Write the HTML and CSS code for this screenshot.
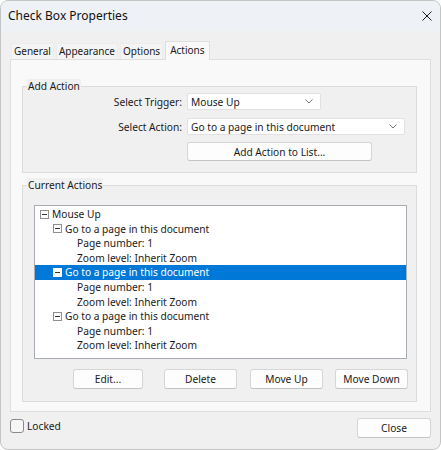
FILE: index.html
```html
<!DOCTYPE html>
<html lang="en">
<head>
    <meta charset="UTF-8">
    <title>Check Box Properties</title>
    <link rel="stylesheet" href="styles.css">
</head>
<body>
<div class="window">
    <div class="titlebar">
        <span class="title">Check Box Properties</span>
        <svg class="close-x" width="10" height="10" viewBox="0 0 10 10">
            <path d="M0.5 0.5 L9.5 9.5 M9.5 0.5 L0.5 9.5" stroke="#1b1b1b" stroke-width="1" fill="none"/>
        </svg>
    </div>
    <div class="content">
        <div class="tabs">
            <div class="tab">General</div>
            <div class="tab">Appearance</div>
            <div class="tab">Options</div>
            <div class="tab active">Actions</div>
        </div>
        <div class="panel">
            <div class="group addGroup">
                <div class="groupTitle">Add Action</div>
                <div class="formRow">
                    <span class="lbl">Select Trigger:</span>
                    <div class="select selTrigger">
                        <span>Mouse Up</span>
                        <svg width="8" height="5" viewBox="0 0 8 5"><path d="M0.5 0.5 L4 4 L7.5 0.5" stroke="#7a7a7a" fill="none"/></svg>
                    </div>
                </div>
                <div class="formRow">
                    <span class="lbl">Select Action:</span>
                    <div class="select selAction">
                        <span>Go to a page in this document</span>
                        <svg width="8" height="5" viewBox="0 0 8 5"><path d="M0.5 0.5 L4 4 L7.5 0.5" stroke="#7a7a7a" fill="none"/></svg>
                    </div>
                </div>
                <div class="formRow">
                    <span class="lbl"></span>
                    <button class="btn addBtn">Add Action to List...</button>
                </div>
            </div>

            <div class="group currentGroup">
                <div class="groupTitle">Current Actions</div>
                <div class="listbox">
                    <div class="node lv1"><span class="toggle"></span>Mouse Up</div>
                    <div class="node lv2"><span class="toggle"></span>Go to a page in this document</div>
                    <div class="node lv3">Page number: 1</div>
                    <div class="node lv3">Zoom level: Inherit Zoom</div>
                    <div class="node lv2 selected"><span class="toggle"></span>Go to a page in this document</div>
                    <div class="node lv3">Page number: 1</div>
                    <div class="node lv3">Zoom level: Inherit Zoom</div>
                    <div class="node lv2"><span class="toggle"></span>Go to a page in this document</div>
                    <div class="node lv3">Page number: 1</div>
                    <div class="node lv3">Zoom level: Inherit Zoom</div>
                </div>
                <div class="btnRow">
                    <button class="btn editBtn">Edit...</button>
                    <button class="btn deleteBtn">Delete</button>
                    <button class="btn">Move Up</button>
                    <button class="btn">Move Down</button>
                </div>
            </div>
        </div>
        <div class="footer">
            <label class="check"><span class="box"></span>Locked</label>
            <button class="btn closeBtn">Close</button>
        </div>
    </div>
</div>
</body>
</html>
```

FILE: styles.css
```css
* {
    box-sizing: border-box;
}

html, body {
    margin: 0;
    background: #ffffff;
}

body {
    font-family: "Noto Sans", "Open Sans", sans-serif;
    font-size: 10.2px;
    color: #1a1a1a;
}

.window {
    width: 441px;
    height: 450px;
    border: 1px solid #c4c4c4;
    border-radius: 8px;
    overflow: hidden;
    background: #f0f0f0;
    display: flex;
    flex-direction: column;
}

.titlebar {
    height: 30px;
    background: #eef2f7;
    display: flex;
    align-items: center;
    justify-content: space-between;
    padding: 0 8px 2px 7px;
}

.title {
    font-size: 12px;
    color: #111;
}

.close-x {
    display: block;
    margin-top: 2px;
}

.content {
    padding: 10px 9px 0 9px;
    flex: 1;
    display: flex;
    flex-direction: column;
}

.tabs {
    display: flex;
    align-items: flex-end;
    gap: 2px;
    padding-left: 1px;
    height: 18px;
    font-size: 10px;
}

.tab {
    height: 16px;
    line-height: 15px;
    padding: 0 2px;
    background: #f4f4f4;
    border: 1px solid #ececec;
    border-bottom: none;
}

.tab.active {
    height: 19px;
    line-height: 16px;
    padding: 0 4px;
    background: #f9f9f9;
    border-color: #dedede;
    margin-bottom: -1px;
    position: relative;
    z-index: 1;
}

.panel {
    background: #f9f9f9;
    border: 1px solid #dedede;
    height: 353px;
    padding: 0 13px 0 11px;
}

.group {
    border: 1px solid #dcdcdc;
    background: #f0f0f0;
}

.groupTitle {
    display: block;
    width: fit-content;
    line-height: 14px;
    height: 14px;
    margin: -8px 0 0 4px;
    padding: 0 1px;
    background: #f0f0f0;
}

.addGroup {
    margin-top: 26px;
    height: 87px;
}

.formRow {
    display: grid;
    grid-template-columns: 159px auto;
    column-gap: 5px;
    align-items: center;
    justify-items: start;
    margin-top: 8px;
}

.groupTitle + .formRow {
    margin-top: 0;
}

.lbl {
    justify-self: end;
}

.select {
    height: 17px;
    background: #ffffff;
    border: 1px solid #e1e1e1;
    border-radius: 2px;
    display: flex;
    align-items: center;
    justify-content: space-between;
    padding: 0 7px 0 3px;
}

.selTrigger {
    width: 134px;
}

.selAction {
    width: 218px;
}

.btn {
    font-family: inherit;
    font-size: inherit;
    color: #1a1a1a;
    background: #fdfdfd;
    border: 1px solid #d6d6d6;
    border-bottom-color: #c4c4c4;
    border-radius: 3px;
    height: 20px;
    padding: 0;
}

.addBtn {
    width: 185px;
    height: 19px;
    margin-top: -1px;
}

.currentGroup {
    margin-top: 12px;
    height: 217px;
}

.listbox {
    margin: 13px 0 0 11px;
    width: 373px;
    height: 154px;
    background: #ffffff;
    border: 1px solid #a8adb3;
    padding: 1px 0 0 0;
}

.node {
    height: 14.6px;
    line-height: 14.6px;
    display: flex;
    align-items: center;
    white-space: nowrap;
}

.lv1 {
    padding-left: 5px;
}

.lv2 {
    padding-left: 18px;
}

.lv3 {
    padding-left: 42px;
}

.toggle {
    width: 9px;
    height: 9px;
    border: 1px solid #8f8f8f;
    background: #ffffff;
    margin-right: 3px;
    display: flex;
    align-items: center;
    justify-content: center;
}

.toggle::after {
    content: "";
    width: 5px;
    height: 1px;
    background: #333333;
}

.node.selected {
    background: #0078d7;
    color: #ffffff;
}

.node.selected .toggle {
    border-color: #ffffff;
}

.btnRow {
    display: flex;
    justify-content: flex-end;
    gap: 12px;
    padding-right: 8px;
    margin-top: 10px;
}

.btnRow .btn {
    width: 73px;
}

.btnRow .editBtn {
    width: 70px;
    margin-right: 9px;
}

.btnRow .deleteBtn {
    margin-right: 1px;
}

.footer {
    display: flex;
    justify-content: space-between;
    align-items: flex-start;
    padding: 6px 0 0 0;
}

.check {
    display: flex;
    align-items: center;
    gap: 3px;
    margin-top: 1px;
}

.box {
    width: 14px;
    height: 14px;
    border: 1px solid #8a8a8a;
    border-radius: 3px;
    background: #f6f6f6;
}

.closeBtn {
    width: 74px;
    height: 20px;
}
```
